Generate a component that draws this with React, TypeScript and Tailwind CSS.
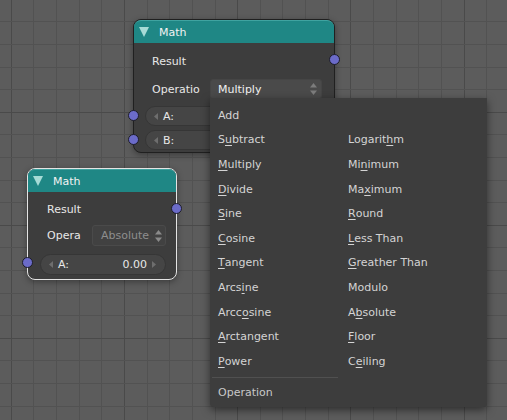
const col1: [string, string, string][] = [
  ["Add", "", ""],
  ["S", "u", "btract"],
  ["", "M", "ultiply"],
  ["", "D", "ivide"],
  ["", "S", "ine"],
  ["", "C", "osine"],
  ["", "T", "angent"],
  ["Arcs", "i", "ne"],
  ["Arcc", "o", "sine"],
  ["", "A", "rctangent"],
  ["", "P", "ower"],
];

const col2: [string, string, string][] = [
  ["Logarit", "h", "m"],
  ["Mi", "n", "imum"],
  ["Ma", "x", "imum"],
  ["", "R", "ound"],
  ["", "L", "ess Than"],
  ["", "G", "reather Than"],
  ["Modulo", "", ""],
  ["A", "b", "solute"],
  ["", "F", "loor"],
  ["C", "e", "iling"],
];

function Grid() {
  const vx = Array.from({ length: 24 }, (_, i) => i - 1);
  const hy = Array.from({ length: 20 }, (_, i) => i);
  return (
    <svg className="absolute inset-0" width="507" height="420" shapeRendering="crispEdges">
      {vx.map((k) => (
        <rect
          key={"v" + k}
          x={Math.round(10.7 + 22.65 * k)}
          y={0}
          width={1}
          height={420}
          fill={k % 5 === 0 ? "#4a4a4a" : "#525252"}
        />
      ))}
      {hy.map((k) => (
        <rect
          key={"h" + k}
          x={0}
          y={Math.round(-1.3 + 22.6 * k)}
          width={507}
          height={1}
          fill={k % 5 === 0 ? "#4a4a4a" : "#525252"}
        />
      ))}
    </svg>
  );
}

function Header() {
  return (
    <div className="flex items-center h-[23px] rounded-t-[7px] bg-[#1f8785] border-t border-[#3fa3a0] text-[#f2f2f2]">
      <svg width="10" height="10" viewBox="0 0 10 10" className="ml-[5px]">
        <polygon points="0,0 10,0 5,10" fill="#a6dbd6" />
      </svg>
      <span className="ml-[10px] pt-[1px]">Math</span>
    </div>
  );
}

function Socket({ className }: { className: string }) {
  return (
    <div
      className={
        "absolute w-[11px] h-[11px] rounded-full bg-[#6b6bc9] border border-[#1d1d2a] " + className
      }
    />
  );
}

function UpDown({ color }: { color: string }) {
  return (
    <svg width="7" height="12" viewBox="0 0 7 12">
      <polygon points="3.5,0 7,4.5 0,4.5" fill={color} />
      <polygon points="0,7.5 7,7.5 3.5,12" fill={color} />
    </svg>
  );
}

function Arrow({ dir }: { dir: "l" | "r" }) {
  return (
    <svg width="4" height="7" viewBox="0 0 4 7">
      {dir === "l" ? (
        <polygon points="4,0 4,7 0,3.5" fill="#6e6e6e" />
      ) : (
        <polygon points="0,0 0,7 4,3.5" fill="#6e6e6e" />
      )}
    </svg>
  );
}

function MenuItem({ t }: { t: [string, string, string] }) {
  return (
    <div className="h-[24.6px] flex items-center whitespace-pre">
      {t[0]}
      {t[1] && <span className="underline underline-offset-[2px]">{t[1]}</span>}
      {t[2]}
    </div>
  );
}

export default function App() {
  return (
    <div className="relative w-[507px] h-[420px] overflow-hidden bg-[#5c5c5c] font-['DejaVu_Sans',sans-serif] text-[11px] leading-none">
      <Grid />

      {/* node 1 */}
      <div className="absolute left-[133px] top-[19px] w-[202px] h-[134px] rounded-[8px] border border-[#202020] bg-[#3d3d3d] shadow-[0_2px_6px_rgba(0,0,0,0.35)] text-[#e8e8e8]">
        <Header />
        <div className="flex flex-col">
          <div className="h-[20px] mt-[8px] flex items-center pl-[18px]">Result</div>
          <div className="h-[20px] mt-[8px] flex items-center">
            <span className="w-[58px] pl-[18px] shrink-0">Operatio</span>
            <div className="w-[112px] h-[20px] ml-[18px] rounded-[3px] bg-[#4a4a4a] border border-[#454545] flex items-center justify-between pl-[7px] pr-[4px] text-[#f0f0f0]">
              <span>Multiply</span>
              <UpDown color="#7c7c7c" />
            </div>
          </div>
          <div className="h-[20px] mt-[7px] ml-[11px] w-[177px] rounded-full bg-[#454545] border border-[#363636] flex items-center pl-[8px]">
            <Arrow dir="l" />
            <span className="ml-[5px]">A:</span>
          </div>
          <div className="h-[20px] mt-[4px] ml-[11px] w-[177px] rounded-full bg-[#454545] border border-[#363636] flex items-center pl-[8px]">
            <Arrow dir="l" />
            <span className="ml-[5px]">B:</span>
          </div>
        </div>
        <Socket className="right-[-6px] top-[34px]" />
        <Socket className="left-[-6px] top-[90px]" />
        <Socket className="left-[-6px] top-[114px]" />
      </div>

      {/* node 2 */}
      <div className="absolute left-[27px] top-[168px] w-[150px] h-[112px] rounded-[8px] border border-[#e4e4e4] bg-[#3d3d3d] shadow-[0_2px_6px_rgba(0,0,0,0.35)] text-[#e8e8e8]">
        <Header />
        <div className="flex flex-col">
          <div className="h-[20px] mt-[7px] flex items-center pl-[19px]">Result</div>
          <div className="h-[21px] mt-[6px] flex items-center">
            <span className="w-[64px] pl-[19px] shrink-0">Opera</span>
            <div className="w-[74px] h-[21px] rounded-[3px] bg-[#414141] border border-[#4a4a4a] flex items-center justify-between pl-[8px] pr-[3px] text-[#8e8e8e]">
              <span>Absolute</span>
              <UpDown color="#8a8a8a" />
            </div>
          </div>
          <div className="h-[21px] mt-[8px] ml-[12px] w-[126px] rounded-full bg-[#454545] border border-[#363636] flex items-center pl-[8px] pr-[9px]">
            <Arrow dir="l" />
            <span className="ml-[5px]">A:</span>
            <span className="ml-auto mr-[5px]">0.00</span>
            <Arrow dir="r" />
          </div>
        </div>
        <Socket className="right-[-6px] top-[34px]" />
        <Socket className="left-[-6px] top-[88px]" />
      </div>

      {/* dropdown menu */}
      <div className="absolute left-[210px] top-[98px] w-[277px] h-[309px] bg-[#3d3d3d] rounded-b-[4px] shadow-[0_3px_9px_rgba(0,0,0,0.5)] text-[#d4d4d4] flex pt-[5px]">
        <div className="w-[138px] flex flex-col">
          <div className="pl-[8px]">
            {col1.map((t, i) => (
              <MenuItem key={i} t={t} />
            ))}
          </div>
          <div className="h-px bg-[#505050] mt-[3px] ml-[2px] mr-[10px]" />
          <div className="h-[24.6px] flex items-center pl-[8px] mt-[3px] text-[#c8c8c8]">Operation</div>
        </div>
        <div className="flex flex-col">
          <div className="h-[24.6px]" />
          {col2.map((t, i) => (
            <MenuItem key={i} t={t} />
          ))}
        </div>
      </div>
    </div>
  );
}
